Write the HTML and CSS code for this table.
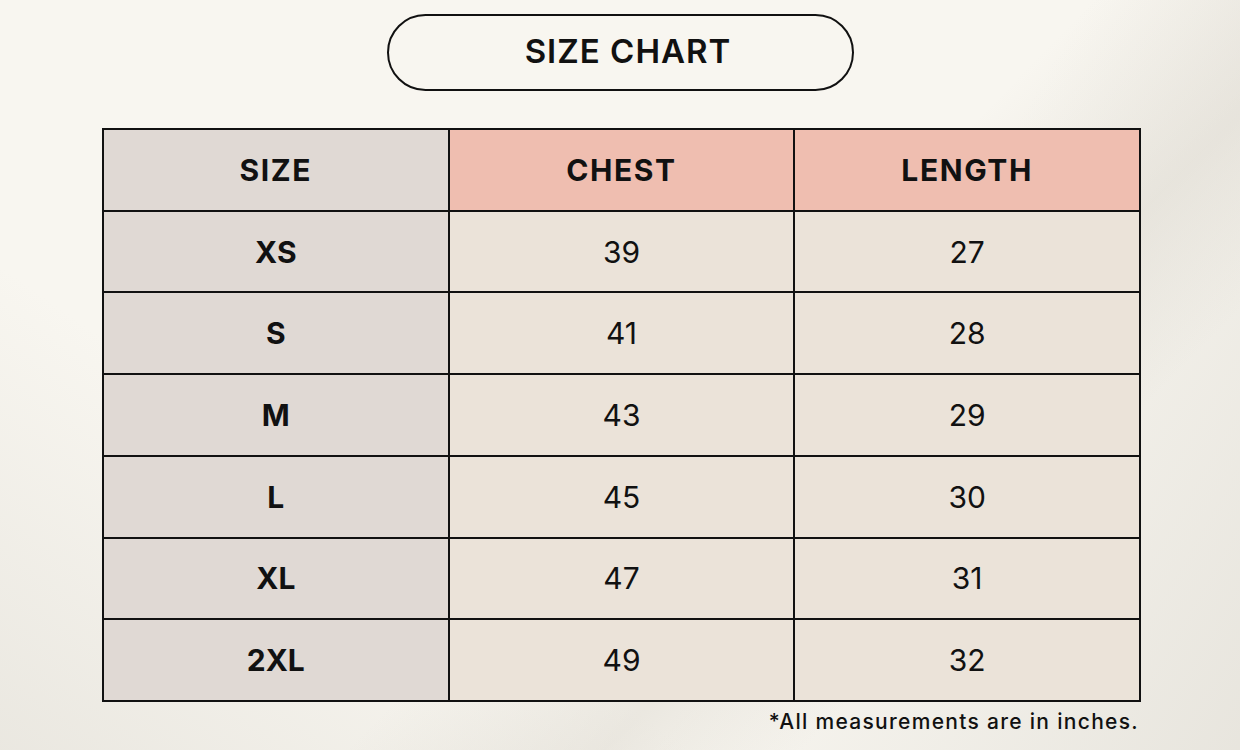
FILE: index.html
```html
<!DOCTYPE html>
<html lang="en">
<head>
<meta charset="utf-8">
<title>Size Chart</title>
<link rel="stylesheet" href="styles.css">
</head>
<body>
<main class="page">
  <div class="title-pill">SIZE CHART</div>
  <div class="chart">
    <div class="cell size head">SIZE</div>
    <div class="cell pink head">CHEST</div>
    <div class="cell pink head">LENGTH</div>

    <div class="cell size">XS</div><div class="cell val">39</div><div class="cell val">27</div>
    <div class="cell size">S</div><div class="cell val">41</div><div class="cell val">28</div>
    <div class="cell size">M</div><div class="cell val">43</div><div class="cell val">29</div>
    <div class="cell size">L</div><div class="cell val">45</div><div class="cell val">30</div>
    <div class="cell size">XL</div><div class="cell val">47</div><div class="cell val">31</div>
    <div class="cell size">2XL</div><div class="cell val">49</div><div class="cell val">32</div>
  </div>
  <p class="note">*All measurements are in inches.</p>
</main>
</body>
</html>
```
FILE: styles.css
```css
html, body {
  margin: 0;
  height: 100%;
}
body {
  width: 1240px;
  height: 750px;
  overflow: hidden;
  font-family: Inter, "Liberation Sans", Arial, sans-serif;
  color: #111;
  background:
    linear-gradient(135deg, rgba(0,0,0,0) 55%, rgba(210,205,195,0.35) 68%, rgba(0,0,0,0) 78%),
    linear-gradient(35deg, rgba(225,222,214,0.6) 0%, rgba(0,0,0,0) 30%),
    linear-gradient(300deg, rgba(225,222,214,0.7) 0%, rgba(0,0,0,0) 35%),
    #f8f6f0;
}
.page {
  display: flex;
  flex-direction: column;
  align-items: center;
  padding-top: 14px;
}
.title-pill {
  box-sizing: border-box;
  width: 467px;
  height: 77px;
  border: 2px solid #111;
  border-radius: 40px;
  display: flex;
  align-items: center;
  justify-content: center;
  font-weight: 600;
  font-size: 33px;
  letter-spacing: 1px;
  padding-left: 16px;
  padding-bottom: 4px;
}
.chart {
  box-sizing: border-box;
  margin-top: 37px;
  width: 1039px;
  height: 574px;
  margin-left: 3px;
  display: grid;
  grid-template-columns: repeat(3, 1fr);
  grid-template-rows: repeat(7, 1fr);
  gap: 2px;
  padding: 2px;
  background: #111;
}
.cell {
  display: flex;
  align-items: center;
  justify-content: center;
  font-size: 30px;
}
.size {
  background: #e0d9d4;
  font-weight: 700;
}
.head {
  font-weight: 700;
  letter-spacing: 1.6px;
}
.pink {
  background: #efbeb0;
}
.val {
  background: #ebe3d9;
  font-weight: 400;
}
.note {
  align-self: flex-end;
  margin: 7px 101px 0 0;
  font-size: 21px;
  font-weight: 500;
  letter-spacing: 1.3px;
}
```
